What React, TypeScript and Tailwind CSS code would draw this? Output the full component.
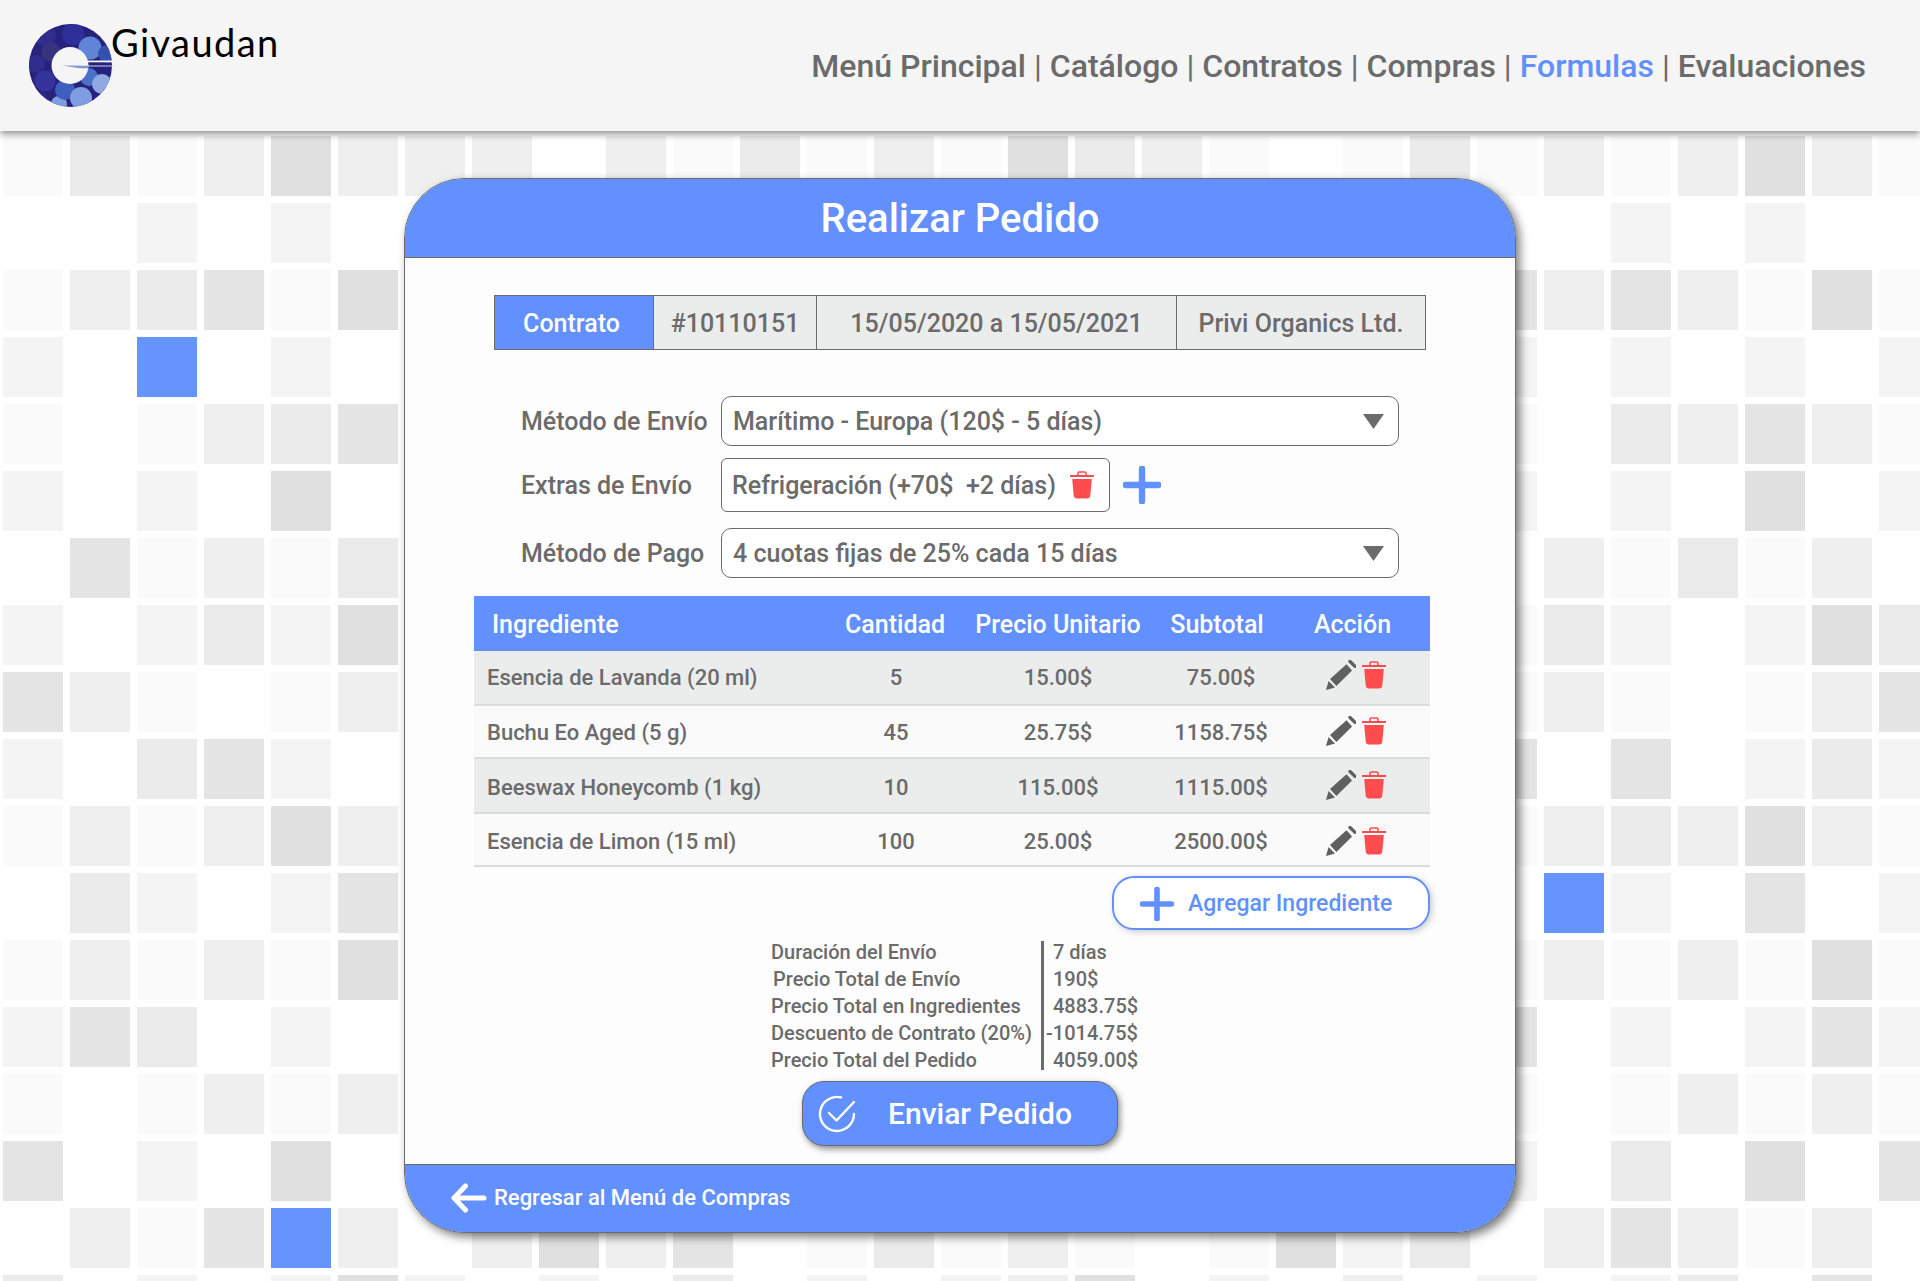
import React from "react";

const tone: Record<string, string> = {
  w: "bg-white",
  a: "bg-[#fafafa]",
  b: "bg-[#f4f4f4]",
  c: "bg-[#efefef]",
  d: "bg-[#ebebeb]",
  e: "bg-[#e4e4e4]",
  f: "bg-[#e0e0e0]",
  B: "bg-[#6694ff]",
};

const gap = "wwwwwwwwwwwwwwww";
const tiles = [
  "adacfc" + "ccwcadacafdcawad" + "acacfca",
  "wwbwbw" + gap + "wwbwbww",
  "acdeaf" + gap + "ececafa",
  "bwBwbw" + gap + "bwbwbwb",
  "awacde" + gap + "awdceca",
  "bwbwfw" + gap + "bwbwfwb",
  "weacad" + gap + "wcadacw",
  "bwbdbf" + gap + "adbwbfd",
  "ecawac" + gap + "acawace",
  "bwdebw" + gap + "ewewbdb",
  "acacfc" + gap + "acdcfca",
  "wdbwbe" + gap + "wBbwewb",
  "acacaf" + gap + "acacafa",
  "bedwbw" + gap + "ewbwbeb",
  "awacac" + gap + "awacaca",
  "ewbwfw" + gap + "bwdwfwe",
  "wcaeBc" + "wcfcewadacawafbd" + "wcecacw",
  "dwbwbf" + "bwbwdwbwbcfwbwcw" + "bwbdwew",
];

function Trash({ className }: { className: string }) {
  return (
    <svg viewBox="0 0 24 28" className={className} aria-hidden="true">
      <rect x="0" y="4" width="24" height="2" fill="#ff4d4f" />
      <path d="M8 4V2.200C8 1.500 8.500 1 9.200 1h5.600c.7 0 1.200.5 1.200 1.200V4" fill="none" stroke="#ff4d4f" strokeWidth="1.6" />
      <path d="M2.200 8h19.600l-1.500 16.500c-.2 1.900-1.400 3-3.200 3H6.900c-1.800 0-3-1.100-3.200-3z" fill="#ff4d4f" />
    </svg>
  );
}

function Pencil({ className }: { className: string }) {
  return (
    <svg viewBox="0 0 30 30" className={className} aria-hidden="true">
      <path d="M0 30l2.600-9 6.400 6.400z" fill="#606060" />
      <path d="M4 19L20.500 4.200l5.600 6.200L10.400 26z" fill="#606060" />
      <path d="M24 1.500l5 4.800" stroke="#606060" strokeWidth="3.4" strokeLinecap="round" fill="none" />
    </svg>
  );
}

function Plus({ className }: { className: string }) {
  return (
    <svg viewBox="0 0 36 36" className={className} aria-hidden="true">
      <path d="M18 2.500v31M2.500 18h31" stroke="#6290fe" strokeWidth="6" strokeLinecap="round" fill="none" />
    </svg>
  );
}

function Caret() {
  return (
    <svg viewBox="0 0 21 15" className="h-[15px] w-[21px]" aria-hidden="true">
      <path d="M0 0h21L10.500 15z" fill="#6b6b6b" />
    </svg>
  );
}

function Logo() {
  return (
    <svg viewBox="0 0 84 84" className="h-[84px] w-[84px] shrink-0" aria-hidden="true">
      <defs>
        <clipPath id="disc">
          <circle cx="41.500" cy="41.500" r="41.500" />
        </clipPath>
      </defs>
      <g clipPath="url(#disc)">
        <rect width="84" height="84" fill="#27237c" />
        <circle cx="16" cy="11" r="11" fill="#312d8c" />
        <circle cx="44" cy="10" r="11" fill="#2f2f9c" />
        <circle cx="61" cy="24" r="11.500" fill="#5f86d6" />
        <circle cx="78" cy="30" r="9" fill="#3650ae" />
        <circle cx="22" cy="28" r="10" fill="#37337f" />
        <circle cx="7" cy="40" r="9" fill="#312d8c" />
        <circle cx="16" cy="57" r="10.500" fill="#35339c" />
        <circle cx="30" cy="80" r="8" fill="#7f9ce0" />
        <circle cx="36" cy="66" r="10" fill="#3f5fc0" />
        <circle cx="60" cy="53" r="9" fill="#4a70c8" />
        <circle cx="73" cy="60" r="10" fill="#8fa9e2" />
        <circle cx="52" cy="74" r="11" fill="#7f9ce0" />
        <circle cx="10" cy="76" r="9" fill="#2c2a88" />
      </g>
      <circle cx="41" cy="41.500" r="18.500" fill="#f5f5f5" />
      <rect x="58" y="36.500" width="26" height="1.800" fill="#f5f5f5" />
      <path d="M33 41.500l26 .2v2.600h-8z" fill="#8296d2" />
      <rect x="59" y="41.500" width="25" height="1" fill="#c9d3ee" />
    </svg>
  );
}

const rows = [
  { name: "Esencia de Lavanda (20 ml)", qty: "5", price: "15.00$", sub: "75.00$", h: "h-[55px] pt-[1px]", bg: "bg-[#ebeded]", icon: "mb-[6px]" },
  { name: "Buchu Eo Aged (5 g)", qty: "45", price: "25.75$", sub: "1158.75$", h: "h-[53px] pt-[2px]", bg: "bg-[#fafafa]", icon: "mb-[3px]" },
  { name: "Beeswax Honeycomb (1 kg)", qty: "10", price: "115.00$", sub: "1115.00$", h: "h-[55px] pt-[4px]", bg: "bg-[#ebeded]", icon: "mb-[6px]" },
  { name: "Esencia de Limon (15 ml)", qty: "100", price: "25.00$", sub: "2500.00$", h: "h-[53px] pt-[5px]", bg: "bg-[#fafafa]", icon: "mb-[2px]" },
];

const cols = "grid grid-cols-[359px_124px_202px_116px_155px] items-center";

export default function App() {
  return (
    <div className="relative h-[1281px] overflow-hidden bg-white font-['Roboto',sans-serif] text-[#6b6b6b]">
      <div className="absolute inset-0 grid grid-cols-[repeat(29,60px)] auto-rows-[60px] gap-[7px] pl-[3px] pt-[136px]">
        {tiles.flatMap((row, r) =>
          row.split("").map((t, c) => <div key={`${r}-${c}`} className={tone[t]} />)
        )}
      </div>

      <header className="relative z-10 flex h-[131px] items-start justify-between bg-[#f5f5f5] pl-[29px] pr-[54px] shadow-[0_3px_7px_rgba(0,0,0,0.45)]">
        <div className="flex items-start pt-[24px]">
          <Logo />
          <span className="-ml-[2px] -mt-[2px] font-['Lato',sans-serif] text-[38px] leading-[40px] tracking-[1.4px] text-black">
            Givaudan
          </span>
        </div>
        <nav className="flex pt-[47px] text-[32px] font-medium leading-[38px]">
          <span>Menú Principal</span>
          <span className="px-[8px] font-normal">|</span>
          <span>Catálogo</span>
          <span className="px-[8px] font-normal">|</span>
          <span>Contratos</span>
          <span className="px-[8px] font-normal">|</span>
          <span>Compras</span>
          <span className="px-[8px] font-normal">|</span>
          <span className="text-[#6290fe]">Formulas</span>
          <span className="px-[8px] font-normal">|</span>
          <span>Evaluaciones</span>
        </nav>
      </header>

      <main className="relative flex justify-center pt-[47px]">
        <section className="flex h-[1055px] w-[1112px] flex-col overflow-hidden rounded-[60px] border border-[#6b6b6b] bg-[#fdfdfd] shadow-[4px_4px_10px_rgba(0,0,0,0.5)]">
          <h1 className="flex h-[79px] shrink-0 items-center justify-center border-b border-[#6b6b6b] bg-[#6290fe] pt-[1px] text-[40px] font-medium text-white">
            Realizar Pedido
          </h1>

          <div className="ml-[89px] mt-[37px] flex h-[55px] w-[932px] text-[25px] font-medium leading-none">
            <div className="flex w-[160px] items-center justify-center border border-[#6b6b6b] bg-[#6290fe] pr-[5px] pt-[1px] text-white">
              Contrato
            </div>
            <div className="flex w-[163px] items-center justify-center border-y border-r border-[#6b6b6b] bg-[#ebeded] pt-[1px]">
              #10110151
            </div>
            <div className="flex w-[360px] items-center justify-center border-y border-r border-[#6b6b6b] bg-[#ebeded] pt-[1px]">
              15/05/2020 a 15/05/2021
            </div>
            <div className="flex w-[249px] items-center justify-center border-y border-r border-[#6b6b6b] bg-[#ebeded] pt-[1px]">
              Privi Organics Ltd.
            </div>
          </div>

          <div className="ml-[116px] mt-[46px] grid grid-cols-[200px_678px] items-center text-[25px] font-medium leading-none">
            <span>Método de Envío</span>
            <div className="flex h-[50px] items-center justify-between rounded-[10px] border border-[#6b6b6b] bg-white pl-[11px] pr-[14px]">
              <span>Marítimo - Europa (120$ - 5 días)</span>
              <Caret />
            </div>
            <span className="mt-[12px]">Extras de Envío</span>
            <div className="mt-[12px] flex h-[54px] items-center">
              <div className="flex h-[54px] w-[389px] items-center justify-between rounded-[6px] border border-[#6b6b6b] bg-white pl-[10px] pr-[15px]">
                <span className="whitespace-pre">Refrigeración (+70$  +2 días)</span>
                <Trash className="h-[28px] w-[24px]" />
              </div>
              <Plus className="ml-[13px] h-[38px] w-[38px]" />
            </div>
            <span className="mt-[16px]">Método de Pago</span>
            <div className="mt-[16px] flex h-[50px] items-center justify-between rounded-[10px] border border-[#6b6b6b] bg-white pl-[11px] pr-[14px]">
              <span>4 cuotas fijas de 25% cada 15 días</span>
              <Caret />
            </div>
          </div>

          <div className="ml-[69px] mt-[18px] w-[956px] text-[22px] font-medium leading-none">
            <div className={`${cols} h-[55px] bg-[#6290fe] pt-[1px] text-[25px] text-white`}>
              <span className="pl-[18px]">Ingrediente</span>
              <span className="text-center">Cantidad</span>
              <span className="text-center">Precio Unitario</span>
              <span className="text-center">Subtotal</span>
              <span className="text-center">Acción</span>
            </div>
            {rows.map((row) => (
              <div key={row.name} className={`${cols} ${row.h} ${row.bg} border-b-2 border-[#dcdcdc]`}>
                <span className="pl-[13px]">{row.name}</span>
                <span className="pl-[2px] text-center">{row.qty}</span>
                <span className="text-center">{row.price}</span>
                <span className="pl-[8px] text-center">{row.sub}</span>
                <span className={`flex items-center gap-[6px] pl-[51px] ${row.icon}`}>
                  <Pencil className="h-[30px] w-[30px]" />
                  <Trash className="h-[28px] w-[24px]" />
                </span>
              </div>
            ))}
          </div>

          <div className="mr-[85px] mt-[9px] flex justify-end">
            <button className="flex h-[54px] w-[318px] items-center rounded-[22px] border-2 border-[#6290fe] bg-white pl-[26px] pt-[2px] text-[23px] font-medium text-[#6290fe] shadow-[2px_2px_6px_rgba(0,0,0,0.2)]">
              <Plus className="h-[34px] w-[34px]" />
              <span className="ml-[14px]">Agregar Ingrediente</span>
            </button>
          </div>

          <div className="ml-[366px] mt-[9px] flex text-[20px] font-medium leading-[27px]">
            <div className="w-[270px]">
              <div>Duración del Envío</div>
              <div className="pl-[2px]">Precio Total de Envío</div>
              <div>Precio Total en Ingredientes</div>
              <div>Descuento de Contrato (20%)</div>
              <div>Precio Total del Pedido</div>
            </div>
            <div className="mb-[4px] mt-[2px] w-[3px] bg-[#6b6b6b]" />
            <div className="pl-[9px]">
              <div>7 días</div>
              <div>190$</div>
              <div>4883.75$</div>
              <div className="-ml-[7px]">-1014.75$</div>
              <div>4059.00$</div>
            </div>
          </div>

          <div className="ml-[397px] mt-[7px]">
            <button className="flex h-[65px] w-[316px] items-center rounded-[22px] border border-[#6b6b6b] bg-[#6290fe] pl-[15px] text-[30px] font-medium text-white shadow-[2px_3px_6px_rgba(0,0,0,0.45)]">
              <svg viewBox="0 0 38 38" className="h-[38px] w-[38px]" aria-hidden="true">
                <path d="M36 19A17 17 0 1 1 23 2.400" fill="none" stroke="#fff" strokeWidth="2.4" strokeLinecap="round" />
                <path d="M11 18l7.500 7.500L36 7" fill="none" stroke="#fff" strokeWidth="2.4" strokeLinecap="round" strokeLinejoin="round" />
              </svg>
              <span className="ml-[32px]">Enviar Pedido</span>
            </button>
          </div>

          <a className="mt-auto flex h-[68px] shrink-0 items-center border-t border-[#6b6b6b] bg-[#6290fe] pb-[2px] pl-[46px] text-[22px] font-medium text-white">
            <svg viewBox="0 0 36 30" className="h-[30px] w-[36px]" aria-hidden="true">
              <path d="M33 15H4M14.500 3L3 15l11.500 12" fill="none" stroke="#fff" strokeWidth="5" strokeLinecap="round" strokeLinejoin="round" />
            </svg>
            <span className="ml-[7px]">Regresar al Menú de Compras</span>
          </a>
        </section>
      </main>
    </div>
  );
}
